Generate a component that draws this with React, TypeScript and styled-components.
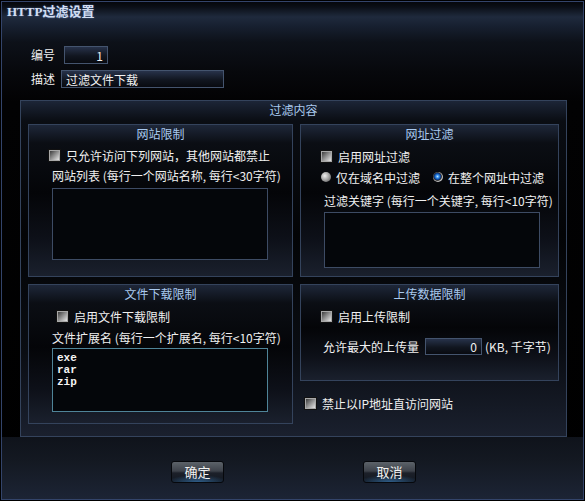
import styled, { createGlobalStyle } from 'styled-components';

const GlobalStyle = createGlobalStyle`
  html, body {
    margin: 0;
    padding: 0;
    background: #000;
  }
  body {
    font-family: "Noto Sans CJK SC", "Noto Sans", sans-serif;
    font-size: 12px;
    color: #f0f0f0;
  }
`;

const CheckRow = ({ indent, top, children }: { indent: number; top: number; children: React.ReactNode }) => (
  <Row $indent={indent} $top={top}>
    <CheckBox />
    <RowText $gap={6}>{children}</RowText>
  </Row>
);

const App = () => (
  <>
    <GlobalStyle />
    <Frame>
      <Window>
        <TitleBar>HTTP过滤设置</TitleBar>
        <Body>
          <Fields>
            <FieldRow>
              <FieldLabel $gap={9}>编号</FieldLabel>
              <TextInput $width={44} $align="right" defaultValue="1" readOnly />
            </FieldRow>
            <FieldRow>
              <FieldLabel $gap={6}>描述</FieldLabel>
              <TextInput $width={163} $align="left" defaultValue="过滤文件下载" readOnly />
            </FieldRow>
          </Fields>

          <Group>
            <GroupTitle>过滤内容</GroupTitle>
            <GroupGrid>
              <Panel $height={153}>
                <PanelTitle>网站限制</PanelTitle>
                <CheckRow indent={20} top={2}>只允许访问下列网站，其他网站都禁止</CheckRow>
                <Row $indent={23} $top={0}>网站列表 (每行一个网站名称, 每行&lt;30字符)</Row>
                <ListBox $height={72} $top={3} readOnly />
              </Panel>

              <Panel $height={153}>
                <PanelTitle>网址过滤</PanelTitle>
                <CheckRow indent={20} top={3}>启用网址过滤</CheckRow>
                <Row $indent={20} $top={1}>
                  <Radio />
                  <RowText $gap={5}>仅在域名中过滤</RowText>
                  <Radio $checked style={{ marginLeft: 13 }} />
                  <RowText $gap={5}>在整个网址中过滤</RowText>
                </Row>
                <Row $indent={23} $top={3}>过滤关键字 (每行一个关键字, 每行&lt;10字符)</Row>
                <ListBox $height={56} $top={2} readOnly />
              </Panel>

              <Panel $height={140}>
                <PanelTitle>文件下载限制</PanelTitle>
                <CheckRow indent={28} top={3}>启用文件下载限制</CheckRow>
                <Row $indent={23} $top={1}>文件扩展名 (每行一个扩展名, 每行&lt;10字符)</Row>
                <ListBox $height={64} $top={1} $focused readOnly defaultValue={'exe\nrar\nzip'} />
              </Panel>

              <Column>
                <Panel $height={97}>
                  <PanelTitle>上传数据限制</PanelTitle>
                  <CheckRow indent={20} top={3}>启用上传限制</CheckRow>
                  <Row $indent={22} $top={12} $height={17}>
                    允许最大的上传量
                    <TextInput $width={57} $align="right" defaultValue="0" readOnly style={{ marginLeft: 6, height: 17 }} />
                    <RowText $gap={3}>(KB, 千字节)</RowText>
                  </Row>
                </Panel>
                <CheckRow indent={5} top={12}>禁止以IP地址直访问网站</CheckRow>
              </Column>
            </GroupGrid>
          </Group>
        </Body>

        <Footer>
          <DialogButton type="button">确定</DialogButton>
          <DialogButton type="button">取消</DialogButton>
        </Footer>
      </Window>
    </Frame>
  </>
);

export default App;

const Frame = styled.div`
  width: 585px;
  height: 501px;
  padding: 1px;
  box-sizing: border-box;
  background: #000;
`;

const Window = styled.div`
  display: flex;
  flex-direction: column;
  height: 100%;
  box-sizing: border-box;
  border: 1px solid #33446a;
  background: linear-gradient(
    to bottom,
    #05070b 0,
    #0b0f17 5px,
    #1f2a3d 15px,
    #172030 24px,
    #0d1119 40px,
    #07080c 70px,
    #020203 100px,
    #000 100%
  );
`;

const TitleBar = styled.div`
  height: 28px;
  padding-left: 5px;
  line-height: 20px;
  font-family: "Liberation Serif", "Noto Sans CJK SC", serif;
  font-size: 13px;
  font-weight: bold;
  color: #d2def2;
  text-shadow: 0 0 2px #4a6a9a;
`;

const Body = styled.div`
  flex: none;
  height: 407px;
  box-sizing: border-box;
  padding: 16px 0 0 18px;
`;

const Fields = styled.div`
  display: flex;
  flex-direction: column;
  gap: 6px;
  padding-left: 11px;
`;

const FieldRow = styled.div`
  display: flex;
  align-items: center;
  height: 18px;
`;

const FieldLabel = styled.span<{ $gap: number }>`
  width: 24px;
  margin-right: ${({ $gap }) => $gap}px;
  line-height: 18px;
`;

const TextInput = styled.input<{ $width: number; $align: 'left' | 'right' }>`
  width: ${({ $width }) => $width}px;
  height: 18px;
  box-sizing: border-box;
  padding: 0 4px;
  border: 1px solid #44546e;
  outline: none;
  background: linear-gradient(to bottom, #27324a 0, #111620 55%, #080a10 100%);
  color: #f2f2f2;
  font-family: "Noto Sans CJK SC", sans-serif;
  font-size: 12px;
  text-align: ${({ $align }) => $align};
`;

const Group = styled.div`
  margin-top: 12px;
  width: 547px;
  height: 337px;
  box-sizing: border-box;
  border: 1px solid #34435c;
  background: linear-gradient(
    to bottom,
    #1c2537 0,
    #0a0d13 20px,
    #030406 40%,
    #0a0d13 75%,
    #1a202e 100%
  );
`;

const GroupTitle = styled.div`
  line-height: 18px;
  margin-bottom: 5px;
  text-align: center;
  color: #a9c9ee;
`;

const GroupGrid = styled.div`
  display: grid;
  grid-template-columns: 265px 259px;
  grid-template-rows: 153px auto;
  gap: 7px;
  padding: 0 7px;
  align-items: start;
`;

const Column = styled.div`
  display: flex;
  flex-direction: column;
`;

const Panel = styled.div<{ $height: number }>`
  height: ${({ $height }) => $height}px;
  box-sizing: border-box;
  border: 1px solid #34435c;
  background: linear-gradient(
    to bottom,
    #1e2739 0,
    #0b0e14 18px,
    #040508 45%,
    #0d1018 75%,
    #1a202d 100%
  );
`;

const PanelTitle = styled.div`
  line-height: 18px;
  text-align: center;
  color: #a9c9ee;
`;

const Row = styled.div<{ $indent: number; $top: number; $height?: number }>`
  display: flex;
  align-items: center;
  height: ${({ $height }) => $height ?? 20}px;
  margin-top: ${({ $top }) => $top}px;
  margin-left: ${({ $indent }) => $indent}px;
  white-space: pre;
  color: #f0f0f0;
`;

const RowText = styled.span<{ $gap: number }>`
  margin-left: ${({ $gap }) => $gap}px;
`;

const CheckBox = styled.span`
  display: inline-block;
  flex: none;
  width: 11px;
  height: 11px;
  box-sizing: border-box;
  border: 1px solid #a8a8a8;
  background: linear-gradient(135deg, #3c3c3c 0%, #8a8a8a 45%, #e6e6e6 100%);
  box-shadow: 0 0 0 1px #111;
`;

const Radio = styled.span<{ $checked?: boolean }>`
  display: inline-block;
  flex: none;
  width: 10px;
  height: 10px;
  border-radius: 50%;
  background: ${({ $checked }) =>
    $checked
      ? 'radial-gradient(circle at 45% 45%, #bfe6ff 0, #2a86e8 22%, #0b3a86 42%, #2a2a2a 50%, #c8c8c8 62%, #5a5a5a 100%)'
      : 'radial-gradient(circle at 38% 38%, #f0f0f0 0, #a8a8a8 45%, #4a4a4a 100%)'};
`;

const ListBox = styled.textarea<{ $height: number; $top: number; $focused?: boolean }>`
  display: block;
  width: 216px;
  height: ${({ $height }) => $height}px;
  margin: ${({ $top }) => $top}px 0 0 23px;
  box-sizing: border-box;
  padding: 3px 4px;
  border: 1px solid ${({ $focused }) => ($focused ? '#4f8498' : '#3d4b64')};
  outline: none;
  resize: none;
  overflow: hidden;
  background: #04060a;
  color: #f4f4f4;
  font-family: "Liberation Mono", monospace;
  font-size: 11px;
  font-weight: bold;
  line-height: 12px;
`;

const Footer = styled.div`
  flex: 1;
  display: flex;
  align-items: flex-start;
  gap: 139px;
  box-sizing: border-box;
  padding: 24px 0 0 169px;
  background: linear-gradient(to bottom, #0f131b 0, #141922 40%, #1c2435 100%);
`;

const DialogButton = styled.button`
  width: 53px;
  height: 22px;
  padding: 0;
  border: 1px solid #06080c;
  border-radius: 3px;
  background:
    radial-gradient(ellipse 60% 35% at 50% 100%, rgba(70, 150, 220, 0.55), transparent),
    linear-gradient(to bottom, #5c6269 0, #3e434b 45%, #1c2029 55%, #121822 100%);
  color: #f2f2f2;
  font-family: "Noto Sans CJK SC", sans-serif;
  font-size: 13px;
  line-height: 20px;
  cursor: pointer;
`;
